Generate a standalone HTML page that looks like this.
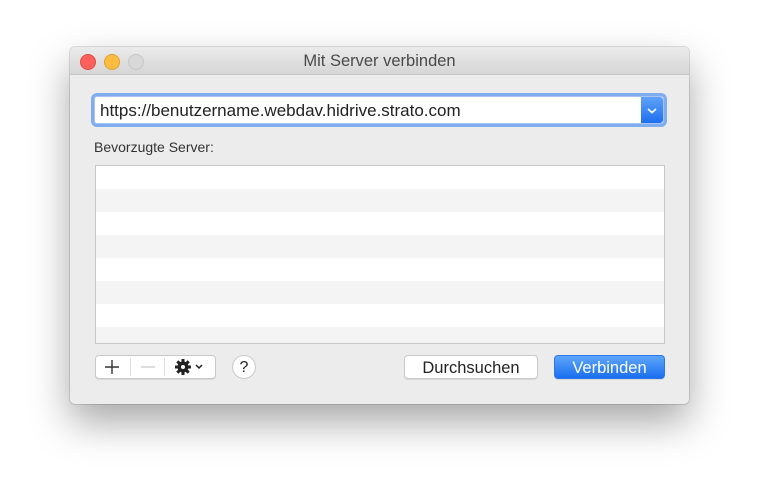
<!DOCTYPE html>
<html><head><style>
body{margin:0;width:759px;height:497px;background:#fff;font-family:"Liberation Sans",sans-serif;position:relative;overflow:hidden}
.win{position:absolute;left:70px;top:47px;width:619px;height:357px;background:#ececec;border-radius:5px;box-shadow:0 18px 40px rgba(0,0,0,.35),0 0 0 1px rgba(0,0,0,.12);overflow:hidden}
.tb{height:27px;background:linear-gradient(#ebebeb,#d6d6d6);border-bottom:1px solid #c4c4c4;text-align:center;font-size:16.5px;line-height:29px;color:#4a4a4a}
.dot{position:absolute;top:7px;width:14px;height:14px;border-radius:50%}
.abs{position:absolute}
.combo{left:24px;top:49px;width:563px;height:26px;background:#fff;border:1px solid #a8c4ee;box-shadow:0 0 0 3px #7fadf0;border-radius:3px;font-size:17px;line-height:27px;padding-left:5px;box-sizing:content-box;color:#222}
.arr{position:absolute;right:0;top:0;width:22px;height:26px;background:linear-gradient(#5fa2f8,#1d6ff0);border-radius:0 3px 3px 0}
.list{left:25px;top:118px;width:568px;height:177px;border:1px solid #c8c8c8;background:repeating-linear-gradient(#fff 0 23px,#f4f4f4 23px 46px)}
.btn{background:#fff;border:1px solid #c9c9c9;border-radius:4px;box-shadow:0 1px 0 rgba(0,0,0,.08);font-size:16.5px;text-align:center;line-height:25px;color:#222;box-sizing:border-box;height:24px}
</style></head><body>
<div class="win">
<div class="tb">Mit Server verbinden</div>
<div class="dot" style="left:10px;background:#fc605c;border:.5px solid #de4a46"></div>
<div class="dot" style="left:34px;background:#fdbc40;border:.5px solid #de9f30"></div>
<div class="dot" style="left:58px;background:#d9d9d9;border:.5px solid #c6c6c6"></div>
<div class="abs combo">https://benutzername.webdav.hidrive.strato.com<div class="arr"><svg width="22" height="26"><path d="M7 12l4 3.5 4-3.5" stroke="#fff" stroke-width="1.6" fill="none"/></svg></div></div>
<div class="abs" style="left:24px;top:92px;font-size:14px;color:#333">Bevorzugte Server:</div>
<div class="abs list"></div>
<div class="abs btn" style="left:25px;top:308px;width:121px;"></div>
<div class="abs" style="left:25px;top:308px;width:121px;height:24px">
 <div class="abs" style="left:35px;top:3px;width:1px;height:18px;background:#ddd"></div>
 <div class="abs" style="left:69px;top:3px;width:1px;height:18px;background:#ddd"></div>
 <svg class="abs" style="left:9px;top:4px" width="16" height="16"><path d="M8 1v14M1 8h14" stroke="#333" stroke-width="1.4"/></svg>
 <svg class="abs" style="left:45px;top:4px" width="16" height="16"><path d="M1 8h14" stroke="#ccc" stroke-width="1.4"/></svg>
 <svg class="abs" style="left:79px;top:3px" width="34" height="18"><g transform="translate(9,9)"><circle r="5.5" fill="#222"/><g stroke="#222" stroke-width="3"><path d="M0-8V8M-8 0H8M-5.7-5.7L5.7 5.7M-5.7 5.7L5.7-5.7"/></g><circle r="2" fill="#fff"/></g><path d="M22 7l3 3 3-3" stroke="#222" stroke-width="1.5" fill="none"/></svg>
</div>
<div class="abs" style="left:162px;top:308px;width:24px;height:24px;border-radius:50%;background:#fff;border:1px solid #c9c9c9;box-sizing:border-box;text-align:center;font-size:16px;line-height:24px;color:#222">?</div>
<div class="abs btn" style="left:334px;top:308px;width:134px">Durchsuchen</div>
<div class="abs btn" style="left:484px;top:308px;width:111px;background:linear-gradient(#5ea6fa,#1a6ef0);border-color:#2a78ee;color:#fff">Verbinden</div>
</div>
</body></html>
